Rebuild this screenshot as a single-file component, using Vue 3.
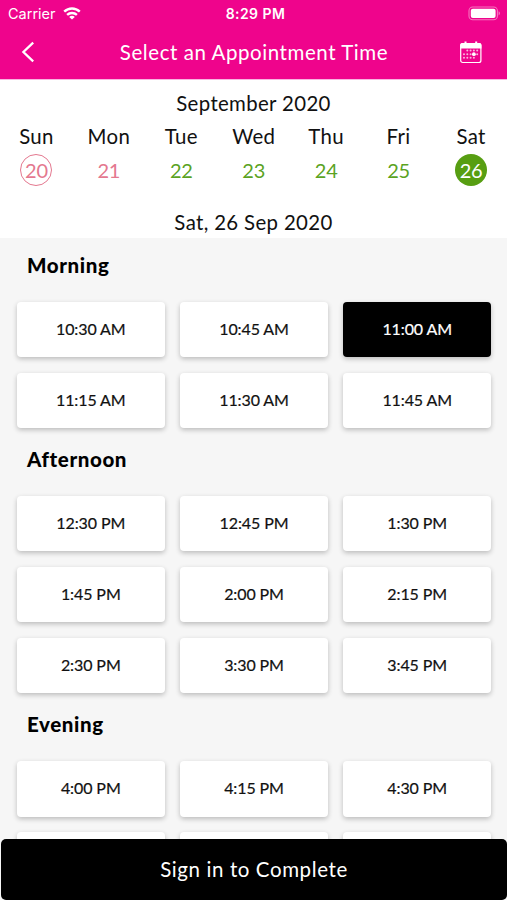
<script setup>
import { ref } from 'vue'

const days = [
  { name: 'Sun', date: 20, state: 'closed today' },
  { name: 'Mon', date: 21, state: 'closed' },
  { name: 'Tue', date: 22, state: 'open' },
  { name: 'Wed', date: 23, state: 'open' },
  { name: 'Thu', date: 24, state: 'open' },
  { name: 'Fri', date: 25, state: 'open' },
  { name: 'Sat', date: 26, state: 'chosen' },
]

const sections = [
  { title: 'Morning', slots: ['10:30 AM', '10:45 AM', '11:00 AM', '11:15 AM', '11:30 AM', '11:45 AM'] },
  {
    title: 'Afternoon',
    slots: ['12:30 PM', '12:45 PM', '1:30 PM', '1:45 PM', '2:00 PM', '2:15 PM', '2:30 PM', '3:30 PM', '3:45 PM'],
  },
  { title: 'Evening', slots: ['4:00 PM', '4:15 PM', '4:30 PM', '', '', ''] },
]

const selected = ref('11:00 AM')

const dots = [
  [8.3, 10.6], [11.6, 10.6], [14.9, 10.6], [18.2, 10.6],
  [5, 14.2], [8.3, 14.2], [11.6, 14.2], [18.2, 14.2],
  [5, 17.8], [8.3, 17.8], [11.6, 17.8], [14.9, 17.8],
]
</script>

<template>
  <div class="screen">
    <header class="top">
      <div class="status">
        <div class="carrier">
          <span>Carrier</span>
          <svg width="18" height="13" viewBox="0 0 18 13" fill="none" stroke="#fff" stroke-width="2.4">
            <path d="M1.2 4.7C5.6.4 12.4.4 16.8 4.7" />
            <path d="M4.1 7.9c2.8-2.6 7-2.6 9.8 0" />
            <path d="M9 12.6 6.2 9.9c1.6-1.4 4-1.4 5.6 0z" fill="#fff" stroke="none" />
          </svg>
        </div>
        <div class="clock">8:29 PM</div>
        <div class="battery">
          <svg width="33" height="15" viewBox="0 0 33 15">
            <rect x="1" y="1" width="28.4" height="12.8" rx="3.8" fill="none" stroke="#fff" stroke-opacity=".45" stroke-width="1.1" />
            <rect x="2.8" y="2.8" width="24.8" height="9.2" rx="2" fill="#fff" />
            <path d="M30.6 5.2c1.7.6 1.7 3.6 0 4.2z" fill="#fff" fill-opacity=".5" />
          </svg>
        </div>
      </div>
      <div class="nav">
        <svg width="14" height="22" viewBox="0 0 14 22" fill="none" stroke="#fff" stroke-width="2.3">
          <path d="M12.2 1.6 2.4 11l9.8 9.4" />
        </svg>
        <h1>Select an Appointment Time</h1>
        <svg width="24" height="24" viewBox="0 0 24 24">
          <path d="M1.2 8.4V5a2 2 0 0 1 2-2h17.2a2 2 0 0 1 2 2v3.4z" fill="#fff" />
          <path d="M6.5 1.5v3M17.2 1.5v3" stroke="#fff" stroke-width="2" />
          <rect x="1.7" y="3.5" width="20.2" height="19" rx="2" fill="none" stroke="#fff" stroke-width="1.2" />
          <circle v-for="(d, i) in dots" :key="i" :cx="d[0]" :cy="d[1]" r="1" fill="#fff" fill-opacity=".7" />
          <circle cx="14.9" cy="14.2" r="1.9" fill="#fff" />
        </svg>
      </div>
    </header>

    <section class="calendar">
      <div class="month">September 2020</div>
      <div class="week">
        <div v-for="d in days" :key="d.name" class="day">
          <span class="name">{{ d.name }}</span>
          <span class="date" :class="d.state">{{ d.date }}</span>
        </div>
      </div>
      <div class="full">Sat, 26 Sep 2020</div>
    </section>

    <main class="times">
      <section v-for="s in sections" :key="s.title" class="group">
        <h2>{{ s.title }}</h2>
        <div class="grid">
          <button
            v-for="(t, i) in s.slots"
            :key="i"
            class="slot"
            :class="{ active: t === selected }"
            @click="selected = t"
          >{{ t }}</button>
        </div>
      </section>
    </main>

    <footer class="bottom">
      <button class="cta">Sign in to Complete</button>
    </footer>
  </div>
</template>

<style>
body {
  margin: 0;
  background: #f6f6f6;
}
</style>

<style scoped>
.screen {
  height: 900px;
  display: flex;
  flex-direction: column;
  overflow: hidden;
  background: #f6f6f6;
  color: #111;
  font-family: Lato, "Liberation Sans", sans-serif;
  font-weight: 400;
}
.top {
  flex: none;
  box-sizing: border-box;
  height: 80px;
  background: #ef048c;
  border-bottom: 1px solid #f9b5e0;
  color: #fff;
}
.status {
  height: 27px;
  display: grid;
  grid-template-columns: 1fr auto 1fr;
  align-items: center;
  padding: 0 6px 0 8px;
  font-family: Inter, sans-serif;
}
.carrier {
  display: flex;
  align-items: center;
  gap: 7px;
  font-size: 14.5px;
}
.carrier svg {
  margin-top: -1px;
}
.clock {
  font-size: 14px;
  font-weight: 600;
  letter-spacing: 0.45px;
  padding-left: 2px;
}
.battery {
  display: flex;
  justify-content: flex-end;
}
.nav {
  height: 50px;
  display: grid;
  grid-template-columns: 50px 1fr 50px;
  align-items: center;
  padding: 0 24px 0 21px;
}
.nav svg:last-child {
  justify-self: end;
}
h1 {
  margin: 0;
  padding-left: 4px;
  text-align: center;
  font-size: 20.5px;
  font-weight: 400;
  letter-spacing: 0.56px;
  white-space: nowrap;
}
.calendar {
  flex: none;
  height: 158px;
  background: #fff;
  text-align: center;
  font-size: 20.4px;
  letter-spacing: 0.35px;
}
.month {
  padding-top: 10px;
  line-height: 26px;
}
.week {
  display: grid;
  grid-template-columns: repeat(7, 1fr);
  padding-top: 7px;
}
.day {
  display: flex;
  flex-direction: column;
  align-items: center;
  padding-left: 0.5px;
}
.name {
  line-height: 26px;
}
.date {
  box-sizing: border-box;
  width: 32px;
  height: 32px;
  margin-top: 5px;
  line-height: 32px;
  border-radius: 50%;
  font-size: 20px;
  letter-spacing: -0.2px;
}
.open {
  color: #5ba31f;
}
.closed {
  color: #e4788f;
}
.today {
  border: 1.5px solid #e4788f;
  line-height: 30px;
}
.chosen {
  background: #579e12;
  color: #fff;
}
.full {
  padding-top: 23px;
  line-height: 26px;
}
.times {
  flex: 1;
  min-height: 0;
  overflow: hidden;
}
.group {
  padding: 0 16px 0 17px;
}
h2 {
  margin: 0 0 0 10px;
  height: 68.3px;
  line-height: 62px;
  font-size: 20.5px;
  font-weight: 900;
  letter-spacing: 0.6px;
  color: #000;
}
.group:first-child h2 {
  height: 64px;
  line-height: 54px;
}
.grid {
  display: grid;
  grid-template-columns: repeat(3, 1fr);
  gap: 15.6px;
}
.slot {
  height: 55.2px;
  padding: 0 0 2px;
  border: 0;
  border-radius: 4px;
  background: #fff;
  box-shadow: 0 2px 5px rgba(0, 0, 0, 0.24);
  color: #111;
  font: 400 16px Lato, "Liberation Sans", sans-serif;
  letter-spacing: -0.1px;
  -webkit-text-stroke: 0.2px currentColor;
}
.slot.active {
  background: #000;
  color: #fff;
}
.bottom {
  flex: none;
  height: 61px;
  padding-left: 1px;
  display: flex;
}
.cta {
  flex: 1;
  padding: 0 0 2px;
  border: 0;
  border-radius: 5px;
  background: #000;
  color: #fff;
  font: 400 20.5px Lato, "Liberation Sans", sans-serif;
  letter-spacing: 0.6px;
}
</style>
